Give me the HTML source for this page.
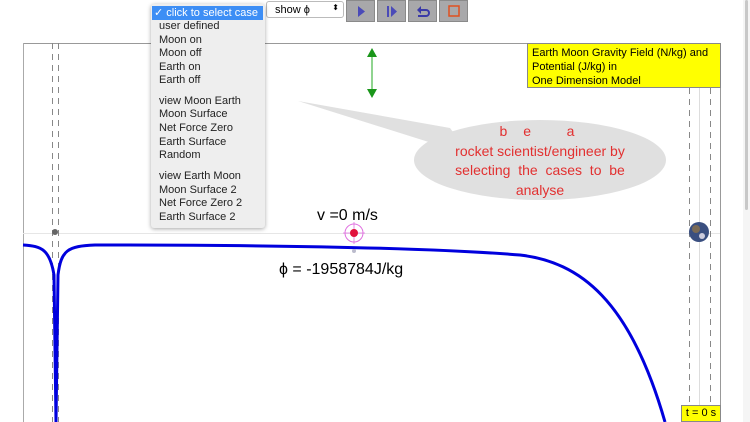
<!DOCTYPE html>
<html><head><style>
body{margin:0;width:750px;height:422px;overflow:hidden;background:#fff;font-family:"Liberation Sans",sans-serif;position:relative}
.a{position:absolute}
.btn{position:absolute;top:0;width:29px;height:22px;background:#a8a8aa;border:1px solid #8a8a8a;box-sizing:border-box}
.menu{left:151px;top:4px;width:114px;height:224px;background:#eeeeee;box-shadow:0 1px 4px rgba(0,0,0,.35);border-radius:3px;font-size:11px;color:#222}
.menu div{position:absolute;left:8px;white-space:nowrap}
</style></head><body>
<svg class="a" style="left:0;top:0" width="750" height="422">
<line x1="23" y1="43.5" x2="527" y2="43.5" stroke="#999"/>
<line x1="23.5" y1="43" x2="23.5" y2="422" stroke="#aaa"/>
<line x1="720.5" y1="88" x2="720.5" y2="422" stroke="#999"/>
<line x1="23" y1="233.5" x2="720" y2="233.5" stroke="#e6e6e6"/>
<line x1="52.5" y1="43" x2="52.5" y2="422" stroke="#888" stroke-dasharray="6,5"/>
<line x1="58.5" y1="43" x2="58.5" y2="422" stroke="#888" stroke-dasharray="6,5"/>
<line x1="689.5" y1="88" x2="689.5" y2="422" stroke="#888" stroke-dasharray="6,5"/>
<line x1="710.5" y1="88" x2="710.5" y2="422" stroke="#888" stroke-dasharray="6,5"/>
<line x1="699.5" y1="88" x2="699.5" y2="422" stroke="#ddd"/>
<rect x="743" y="0" width="7" height="422" fill="#f5f5f5"/>
<rect x="745" y="0" width="3" height="210" rx="1.5" fill="#c8c8c8"/>
<line x1="372" y1="55" x2="372" y2="92" stroke="#2a2" stroke-width="1"/>
<polygon points="372,48 367,57 377,57" fill="#1a961a"/>
<polygon points="372,98 367,89 377,89" fill="#1a961a"/>
<path d="M298,101 L450,128 L470,155 Z" fill="#e0e0e0"/>
<ellipse cx="540" cy="160" rx="126" ry="40" fill="#e0e0e0"/>
<path d="M23,245 C42,246 50,250 54,275 L56,422 M56,422 L58,275 C61,250 68,246 95,245 C250,245 420,247 520,255 C580,262 630,300 665,422" fill="none" stroke="#0000dd" stroke-width="3"/>
<circle cx="354" cy="233" r="9" fill="none" stroke="#e070e0" stroke-width="1"/>
<line x1="343" y1="233" x2="365" y2="233" stroke="#e070e0" stroke-width=".8"/>
<line x1="354" y1="222" x2="354" y2="244" stroke="#e070e0" stroke-width=".8"/>
<circle cx="354" cy="233" r="4" fill="#e0103c"/>
<circle cx="354" cy="251" r="2" fill="#bbc"/>
<circle cx="55" cy="232" r="3" fill="#666"/>
<circle cx="699" cy="232" r="10" fill="#3a4f80"/>
<circle cx="696" cy="229" r="4" fill="#7a6a55"/>
<circle cx="702" cy="236" r="3" fill="#ccd"/>
</svg>
<div class="a" style="left:266px;top:1px;width:78px;height:17px;background:#fff;border:1px solid #bbb;box-sizing:border-box;border-radius:3px;font-size:11px;padding:2px 0 0 8px">show ϕ<span style="position:absolute;right:4px;top:1px;font-size:8px">⬍</span></div>
<div class="btn" style="left:346px"><svg width="27" height="20"><polygon points="11,5 11,16 18,10.5" fill="#4a4ab8"/></svg></div>
<div class="btn" style="left:377px"><svg width="27" height="20"><rect x="9" y="5" width="2" height="11" fill="#4a4ab8"/><polygon points="13,5 13,16 19,10.5" fill="#4a4ab8"/></svg></div>
<div class="btn" style="left:408px"><svg width="27" height="20"><path d="M9,15 H17 A3,3 0 0 0 17,9 H11" fill="none" stroke="#3a3aa8" stroke-width="2"/><polygon points="8,9 12,5 12,13" fill="#3a3aa8"/></svg></div>
<div class="btn" style="left:439px"><svg width="27" height="20"><rect x="9" y="5" width="10" height="10" fill="none" stroke="#e05020" stroke-width="1.5"/></svg></div>
<div class="a" style="left:527px;top:43px;width:194px;height:45px;background:#ffff00;border:1px solid #888;box-sizing:border-box;font-size:11px;line-height:14px;padding:2px 0 0 4px;white-space:nowrap">Earth Moon Gravity Field (N/kg) and<br>Potential (J/kg) in<br>One Dimension Model</div>
<div class="a" style="left:420px;top:122px;width:240px;text-align:center;color:#e23030;font-size:14px;line-height:19.5px"><span style="letter-spacing:6px">b e&nbsp;&nbsp; a</span><br>rocket scientist/engineer by<br>selecting&nbsp; the&nbsp; cases&nbsp; to&nbsp; be<br>analyse</div>
<div class="a" style="left:317px;top:207px;font-size:16px">v =0 m/s</div>
<div class="a" style="left:279px;top:261px;font-size:16px">ϕ = -1958784J/kg</div>
<div class="a" style="left:681px;top:405px;width:40px;height:17px;background:#ffff00;border:1px solid #888;box-sizing:border-box;font-size:11px;text-align:center;line-height:15px">t = 0 s</div>
<div class="a menu">
<div style="left:1px;top:2px;width:111px;height:14px;background:#3d8ef5;color:#fff;padding-left:2px;box-sizing:border-box;line-height:14px">✓ click to select case</div>
<div style="top:16px">user defined</div>
<div style="top:30px">Moon on</div>
<div style="top:43px">Moon off</div>
<div style="top:57px">Earth on</div>
<div style="top:70px">Earth off</div>
<div style="top:91px">view Moon Earth</div>
<div style="top:104px">Moon Surface</div>
<div style="top:118px">Net Force Zero</div>
<div style="top:132px">Earth Surface</div>
<div style="top:145px">Random</div>
<div style="top:166px">view Earth Moon</div>
<div style="top:180px">Moon Surface 2</div>
<div style="top:193px">Net Force Zero 2</div>
<div style="top:207px">Earth Surface 2</div>
</div>
</body></html>
